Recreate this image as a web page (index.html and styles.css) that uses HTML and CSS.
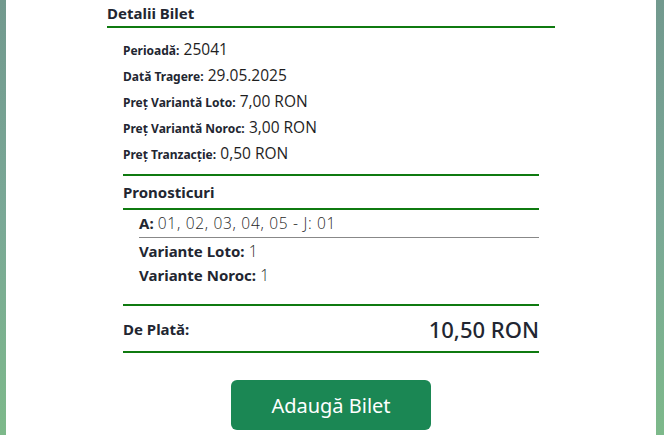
FILE: index.html
```html
<!DOCTYPE html>
<html lang="ro">
<head>
<meta charset="utf-8">
<link rel="stylesheet" href="styles.css">
</head>
<body>
<div class="page">
  <div class="panel">
    <section class="card">
      <h2 class="card-title">Detalii Bilet</h2>
      <div class="details">
        <div class="row"><span class="lbl">Perioadă:</span> <span class="val">25041</span></div>
        <div class="row"><span class="lbl">Dată Tragere:</span> <span class="val">29.05.2025</span></div>
        <div class="row"><span class="lbl">Preț Variantă Loto:</span> <span class="val">7,00 RON</span></div>
        <div class="row"><span class="lbl">Preț Variantă Noroc:</span> <span class="val">3,00 RON</span></div>
        <div class="row"><span class="lbl">Preț Tranzacție:</span> <span class="val">0,50 RON</span></div>
      </div>
      <div class="inner">
        <h3 class="sub-title">Pronosticuri</h3>
        <div class="prono">
          <div class="combo"><span class="plbl">A:</span> <span class="pval">01, 02, 03, 04, 05 - J: 01</span></div>
          <div class="counts">
            <div class="prow"><span class="plbl">Variante Loto:</span> <span class="pval">1</span></div>
            <div class="prow"><span class="plbl">Variante Noroc:</span> <span class="pval">1</span></div>
          </div>
        </div>
        <div class="total">
          <span class="tlbl">De Plată:</span>
          <span class="tval">10,50 RON</span>
        </div>
      </div>
      <div class="actions">
        <button class="btn">Adaugă Bilet</button>
      </div>
    </section>
  </div>
</div>
</body>
</html>
```
FILE: styles.css
```css
html, body { margin: 0; padding: 0; }
body {
  width: 664px;
  height: 435px;
  overflow: hidden;
  font-family: "Noto Sans", "Open Sans", sans-serif;
  color: #222631;
}
.page {
  height: 435px;
  display: flex;
  padding: 0 8px 0 6px;
  box-sizing: border-box;
  background: linear-gradient(180deg, #72998e 0%, #7aa896 50%, #7db98a 100%);
}
.panel {
  flex: 1;
  background: #fff;
  display: flex;
  justify-content: center;
}
.card {
  width: 448px;
}
.card-title {
  margin: 0;
  padding: 3px 0 3px 0;
  font-size: 15px;
  font-weight: 700;
  line-height: 20px;
  border-bottom: 2px solid #0f7a10;
}
.details {
  padding: 8px 16px 8px;
}
.row {
  height: 26px;
  line-height: 26px;
  white-space: nowrap;
}
.lbl {
  font-size: 12px;
  font-weight: 700;
}
.val {
  font-family: "Open Sans", sans-serif;
  font-size: 15.5px;
  font-weight: 400;
  color: #1e1e1e;
}
.inner {
  margin: 0 16px;
}
.sub-title {
  margin: 0;
  border-top: 2px solid #0f7a10;
  border-bottom: 2px solid #0f7a10;
  font-size: 15px;
  font-weight: 700;
  line-height: 32px;
}
.prono {
  padding: 0 0 17px 16px;
}
.combo {
  border-bottom: 1px solid #888;
  line-height: 27px;
  white-space: nowrap;
}
.counts {
  padding-top: 1px;
}
.prow {
  line-height: 24px;
}
.plbl {
  font-size: 15px;
  font-weight: 700;
}
.pval {
  font-family: "Open Sans", sans-serif;
  font-weight: 300;
  font-size: 15.5px;
  letter-spacing: 0.7px;
  color: #1f1f1f;
}
.total {
  display: flex;
  justify-content: space-between;
  align-items: center;
  border-top: 2px solid #0f7a10;
  border-bottom: 2px solid #0f7a10;
  height: 45px;
}
.tlbl { font-size: 15px; font-weight: 700; }
.tval {
  font-size: 22px;
  font-weight: 500;
  font-family: "Noto Sans", sans-serif;
}
.actions {
  display: flex;
  justify-content: center;
  padding-top: 27px;
}
.btn {
  width: 200px;
  height: 50px;
  border: none;
  border-radius: 6px;
  background: #1b8754;
  color: #fff;
  font-family: "Noto Sans", sans-serif;
  font-size: 20px;
  font-weight: 400;
}
```
